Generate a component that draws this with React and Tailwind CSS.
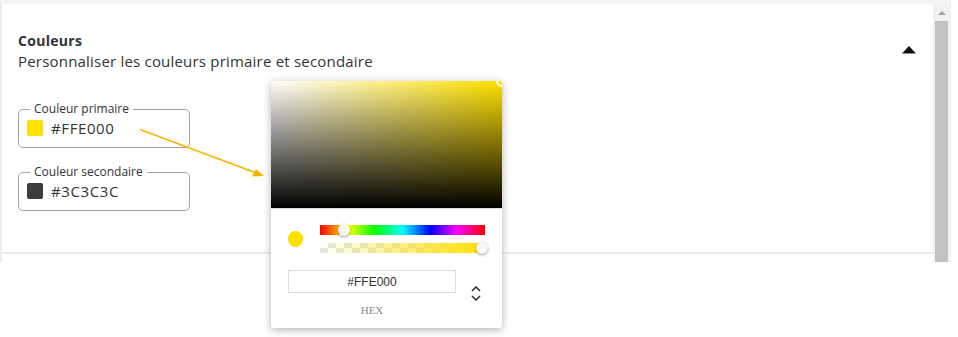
import React from "react";

function Field({ label, color, value, className = "" }) {
  return (
    <fieldset className={"w-[172px] rounded-[5px] border border-[#a3a3a3] pl-[8px] pb-[11px] " + className}>
      <legend className="ml-[3px] px-[4px] text-[12px] leading-[14px] text-[#333]">{label}</legend>
      <div className="mt-[4px] flex h-[16px] items-center gap-[8px]">
        <div className="h-[16px] w-[16px] rounded-[2px]" style={{ backgroundColor: color }} />
        <span className="text-[15px] leading-[16px] tracking-[0.6px] text-[#333]">{value}</span>
      </div>
    </fieldset>
  );
}

export default function App() {
  return (
    <div className="relative h-[337px] w-[958px] overflow-hidden bg-white font-['Open_Sans',sans-serif]">
      <div className="flex h-[262px]">
        <div className="flex w-[933px] flex-col">
          <div className="h-[4px] bg-[#f4f4f4]" />
          <div className="flex flex-1 flex-col border-l-2 border-[#ececec]">
            <div className="flex flex-col px-[16px] pt-[27px] pb-[41px] border-b-2 border-[#ebebeb]">
              <div className="flex items-start justify-between">
                <div>
                  <div className="text-[14px] font-bold leading-[20px] tracking-[0.3px] text-[#333]">Couleurs</div>
                  <div className="text-[15px] leading-[20px] tracking-[0.2px] text-[#333]">Personnaliser les couleurs primaire et secondaire</div>
                </div>
                <svg width="14" height="8" viewBox="0 0 14 8" className="mt-[15px] mr-[1px]">
                  <polygon points="7,0 14,7.5 0,7.5" fill="#111" />
                </svg>
              </div>
              <Field className="mt-[31px]" label="Couleur primaire" color="#FFE000" value="#FFE000" />
              <Field className="mt-[17px]" label="Couleur secondaire" color="#3C3C3C" value="#3C3C3C" />
            </div>
          </div>
        </div>
        <div className="flex w-[17px] flex-col bg-[#f1f1f1]">
          <div className="h-[4px] bg-[#f4f4f4]" />
          <div className="flex h-[17px] items-center justify-center">
            <svg width="8" height="4" viewBox="0 0 8 4">
              <polygon points="4,0 8,4 0,4" fill="#a3a3a3" />
            </svg>
          </div>
          <div className="mx-[2px] flex-1 bg-[#c1c1c1]" />
        </div>
        <div className="w-[8px] border-l border-[#f0f0f0] bg-white" />
      </div>

      {/* arrow annotation */}
      <svg className="pointer-events-none absolute left-0 top-0" width="958" height="337">
        <line x1="140" y1="129.5" x2="259" y2="174" stroke="#f5b400" strokeWidth="1.5" />
        <polygon points="264,176 252,176.5 256,169" fill="#f5b400" />
      </svg>

      {/* color picker popover */}
      <div className="absolute left-[271px] top-[81px] flex h-[247px] w-[231px] flex-col overflow-hidden rounded-[3px] bg-white shadow-[0_2px_8px_rgba(0,0,0,0.3)]">
        <div className="relative h-[127px] overflow-hidden bg-[#FFE000]">
          <div className="absolute inset-0 bg-gradient-to-r from-white to-transparent" />
          <div className="absolute inset-0 bg-gradient-to-b from-transparent to-black" />
          <div className="absolute right-[-6px] top-[-6px] h-[12px] w-[12px] rounded-full border-2 border-white" />
        </div>
        <div className="border-t border-[#ddd]" />
        <div className="flex items-center px-[17px] pt-[16px]">
          <div className="h-[16px] w-[16px] rounded-full bg-[#FFE000]" />
          <div className="ml-[17px] flex flex-col gap-[8px]">
            <div className="relative h-[10px] w-[165px] bg-[linear-gradient(to_right,#f00_0%,#ff0_17%,#0f0_33%,#0ff_50%,#00f_67%,#f0f_83%,#f00_100%)]">
              <div className="absolute left-[18px] top-[-1px] h-[12px] w-[12px] rounded-full bg-[#f8f8f8] shadow-[0_1px_3px_rgba(0,0,0,0.4)]" />
            </div>
            <div className="relative h-[10px] w-[165px] bg-[conic-gradient(#e6e6e6_25%,#fff_0_50%,#e6e6e6_0_75%,#fff_0)] bg-[length:16px_10px]">
              <div className="absolute inset-0 bg-gradient-to-r from-transparent to-[#FFE000]" />
              <div className="absolute left-[156px] top-[-1px] h-[12px] w-[12px] rounded-full bg-[#f8f8f8] shadow-[0_1px_3px_rgba(0,0,0,0.4)]" />
            </div>
          </div>
        </div>
        <div className="mt-[17px] flex items-start px-[17px]">
          <div className="flex w-[168px] flex-col items-center">
            <div className="flex h-[23px] w-[168px] items-center justify-center border border-[#dadada] font-['Liberation_Sans',sans-serif] text-[12px] text-[#333]">
              #FFE000
            </div>
            <div className="mt-[10px] font-['Liberation_Serif',serif] text-[11px] leading-[14px] text-[#888]">HEX</div>
          </div>
          <div className="ml-[15px] mt-[16px] flex flex-col items-center gap-[3px]">
            <svg width="10" height="6" viewBox="0 0 10 6">
              <polyline points="1,5 5,1 9,5" fill="none" stroke="#333" strokeWidth="1.6" />
            </svg>
            <svg width="10" height="6" viewBox="0 0 10 6">
              <polyline points="1,1 5,5 9,1" fill="none" stroke="#333" strokeWidth="1.6" />
            </svg>
          </div>
        </div>
      </div>
    </div>
  );
}
